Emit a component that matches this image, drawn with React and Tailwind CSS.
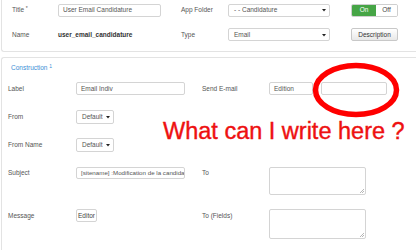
import React from 'react';

const FONT = { fontFamily: '"Liberation Sans", Arial, sans-serif' };

function Caret() {
    return (
        <svg width="4" height="4" viewBox="0 0 4 4" className="shrink-0">
            <path d="M0 1 L4 1 L2 3.6 Z" fill="#222" />
        </svg>
    );
}

function Select({ value, className }) {
    return (
        <div className={`flex items-center justify-between rounded-[2px] border border-[#d4d4d4] bg-white pl-[5px] pr-[3px] text-[6.5px] text-[#555] ${className}`}>
            <span>{value}</span>
            <Caret />
        </div>
    );
}

function Input({ value, className }) {
    return (
        <div className={`flex items-center overflow-hidden whitespace-nowrap rounded-[2px] border border-[#d4d4d4] bg-white pl-[4px] text-[#555] ${className}`}>
            {value}
        </div>
    );
}

function TextArea({ className }) {
    return (
        <div className={`relative rounded-[2px] border border-[#d4d4d4] bg-white ${className}`}>
            <svg width="5" height="5" viewBox="0 0 5 5" className="absolute bottom-[1px] right-[1px]">
                <path d="M1 5 L5 1 M3 5 L5 3" stroke="#999" strokeWidth="0.7" />
            </svg>
        </div>
    );
}

export default function App() {
    return (
        <div className="relative h-[250px] w-[416px] overflow-hidden bg-white pl-px" style={FONT}>
            {/* Top panel */}
            <div className="h-[52px] rounded-bl-[3px] border-b border-l border-[#e3e3e3] pt-[4px]">
                <div className="flex h-[12px] items-center">
                    <div className="w-[56px] pl-[10px] text-[6.5px] text-[#555]">
                        Title <sup className="text-[5px]">*</sup>
                    </div>
                    <Input value="User Email Candidature" className="h-[13px] w-[103px] text-[6.5px]" />
                    <div className="ml-[20px] w-[47px] text-[6.5px] text-[#555]">App Folder</div>
                    <Select value="- - Candidature" className="h-[13px] w-[102px]" />
                    <div className="ml-[21px] flex h-[13px] w-[47px] overflow-hidden rounded-[2px] border border-[#cfcfcf] text-[6.5px]">
                        <div className="flex w-[24px] items-center justify-center bg-[#46a546] text-white">On</div>
                        <div className="flex flex-1 items-center justify-center bg-white text-[#444]">Off</div>
                    </div>
                </div>
                <div className="mt-[12px] flex h-[13px] items-center">
                    <div className="w-[56px] pl-[10px] text-[6.5px] text-[#555]">Name</div>
                    <div className="w-[103px] text-[6.5px] font-bold text-[#333]">user_email_candidature</div>
                    <div className="ml-[20px] w-[47px] text-[6.5px] text-[#555]">Type</div>
                    <Select value="Email" className="h-[13px] w-[102px]" />
                    <div className="ml-[21px] flex h-[13px] w-[47px] items-center justify-center rounded-[2px] border border-[#c8c8c8] bg-gradient-to-b from-white to-[#e8e8e8] text-[6.5px] text-[#333]">
                        Description
                    </div>
                </div>
            </div>

            {/* Construction panel */}
            <div className="mt-[5px] h-[200px] rounded-tl-[3px] border-l border-t border-[#e3e3e3] pt-[5px] text-[6.5px] text-[#555]">
                <div className="h-[10px] pl-[9px] leading-[10px] text-[#3b8fd6]">
                    Construction <sup className="text-[5px]">1</sup>
                </div>

                <div className="mt-[9px] flex h-[13px] items-center">
                    <div className="w-[74px] pl-[6px]">Label</div>
                    <Input value="Email Indiv" className="h-[13px] w-[109px] text-[6.5px]" />
                    <div className="ml-[17px] w-[67px]">Send E-mail</div>
                    <Input value="Edition" className="h-[13px] w-[44px] text-[6.5px]" />
                    <Input value="" className="ml-[8px] h-[13px] w-[66px]" />
                </div>

                <div className="mt-[15px] flex h-[14px] items-center">
                    <div className="w-[74px] pl-[6px]">From</div>
                    <Select value="Default" className="h-[14px] w-[38px]" />
                </div>

                <div className="mt-[14px] flex h-[14px] items-center">
                    <div className="w-[74px] pl-[6px]">From Name</div>
                    <Select value="Default" className="h-[14px] w-[38px]" />
                </div>

                <div className="mt-[15px] flex items-start">
                    <div className="flex h-[12px] w-[74px] items-center pl-[6px]">Subject</div>
                    <Input value="[sitename] :Modification de la candida" className="h-[12px] w-[109px] text-[6.2px]" />
                    <div className="ml-[17px] flex h-[12px] w-[67px] items-center">To</div>
                    <TextArea className="h-[28px] w-[97px]" />
                </div>

                <div className="mt-[14px] flex items-start">
                    <div className="flex h-[13px] w-[74px] items-center pl-[6px]">Message</div>
                    <div className="flex h-[13px] w-[21px] items-center justify-center rounded-[2px] border border-[#d4d4d4] bg-white text-[#444]">Editor</div>
                    <div className="ml-[105px] flex h-[13px] w-[67px] items-center">To (Fields)</div>
                    <TextArea className="h-[30px] w-[97px]" />
                </div>
            </div>

            {/* Annotation overlay */}
            <svg className="pointer-events-none absolute left-0 top-0" width="416" height="250">
                <ellipse cx="356" cy="90" rx="40.5" ry="24.5" fill="none" stroke="#ff0000" strokeWidth="5.5" />
            </svg>
            <div className="pointer-events-none absolute left-[163px] top-[120px] whitespace-nowrap text-[23.5px] leading-none text-[#ee1111] [-webkit-text-stroke:0.4px_#ee1111]">
                What can I write here ?
            </div>
        </div>
    );
}
